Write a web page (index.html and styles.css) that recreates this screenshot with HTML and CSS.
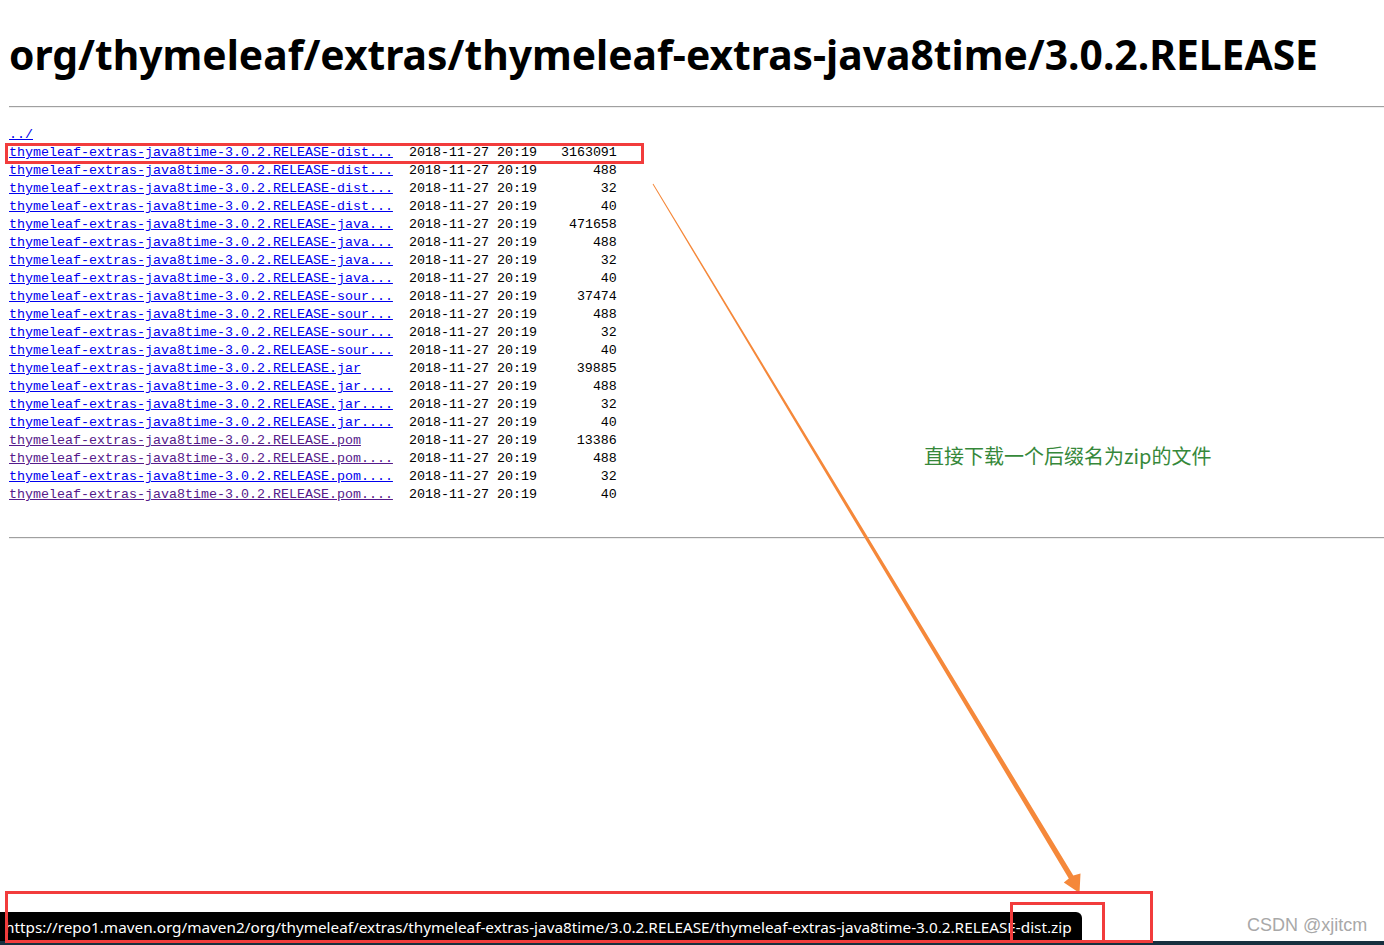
FILE: index.html
```html
<!DOCTYPE html>
<html>
<head>
<meta charset="utf-8">
<title>Index of /maven2/org/thymeleaf/extras/thymeleaf-extras-java8time/3.0.2.RELEASE/</title>
<link rel="stylesheet" href="styles.css">
</head>
<body>
<h1 class="title">org/thymeleaf/extras/thymeleaf-extras-java8time/3.0.2.RELEASE</h1>
<hr class="rule rule-top">
<pre class="listing"><a href="#">../</a>
<a href="#">thymeleaf-extras-java8time-3.0.2.RELEASE-dist...</a>  2018-11-27 20:19   3163091
<a href="#">thymeleaf-extras-java8time-3.0.2.RELEASE-dist...</a>  2018-11-27 20:19       488
<a href="#">thymeleaf-extras-java8time-3.0.2.RELEASE-dist...</a>  2018-11-27 20:19        32
<a href="#">thymeleaf-extras-java8time-3.0.2.RELEASE-dist...</a>  2018-11-27 20:19        40
<a href="#">thymeleaf-extras-java8time-3.0.2.RELEASE-java...</a>  2018-11-27 20:19    471658
<a href="#">thymeleaf-extras-java8time-3.0.2.RELEASE-java...</a>  2018-11-27 20:19       488
<a href="#">thymeleaf-extras-java8time-3.0.2.RELEASE-java...</a>  2018-11-27 20:19        32
<a href="#">thymeleaf-extras-java8time-3.0.2.RELEASE-java...</a>  2018-11-27 20:19        40
<a href="#">thymeleaf-extras-java8time-3.0.2.RELEASE-sour...</a>  2018-11-27 20:19     37474
<a href="#">thymeleaf-extras-java8time-3.0.2.RELEASE-sour...</a>  2018-11-27 20:19       488
<a href="#">thymeleaf-extras-java8time-3.0.2.RELEASE-sour...</a>  2018-11-27 20:19        32
<a href="#">thymeleaf-extras-java8time-3.0.2.RELEASE-sour...</a>  2018-11-27 20:19        40
<a href="#">thymeleaf-extras-java8time-3.0.2.RELEASE.jar</a>      2018-11-27 20:19     39885
<a href="#">thymeleaf-extras-java8time-3.0.2.RELEASE.jar....</a>  2018-11-27 20:19       488
<a href="#">thymeleaf-extras-java8time-3.0.2.RELEASE.jar....</a>  2018-11-27 20:19        32
<a href="#">thymeleaf-extras-java8time-3.0.2.RELEASE.jar....</a>  2018-11-27 20:19        40
<a class="visited" href="#">thymeleaf-extras-java8time-3.0.2.RELEASE.pom</a>      2018-11-27 20:19     13386
<a class="visited" href="#">thymeleaf-extras-java8time-3.0.2.RELEASE.pom....</a>  2018-11-27 20:19       488
<a href="#">thymeleaf-extras-java8time-3.0.2.RELEASE.pom....</a>  2018-11-27 20:19        32
<a class="visited" href="#">thymeleaf-extras-java8time-3.0.2.RELEASE.pom....</a>  2018-11-27 20:19        40
</pre>
<hr class="rule rule-bottom">

<svg class="arrow" width="1384" height="945" viewBox="0 0 1384 945" xmlns="http://www.w3.org/2000/svg">
  <polygon fill="#f5883a" points="653.4,183.7 1073.3,875.6 1080.5,873.5 1079.5,893 1063.8,882.5 1068.8,878.4 652.6,184.3"/>
</svg>

<div class="note">直接下载一个后缀名为zip的文件</div>

<div class="status">https://repo1.maven.org/maven2/org/thymeleaf/extras/thymeleaf-extras-java8time/3.0.2.RELEASE/thymeleaf-extras-java8time-3.0.2.RELEASE-dist.zip</div>
<div class="taskbar"></div>
<div class="watermark">CSDN @xjitcm</div>

<div class="mark mark-row"></div>
<div class="mark mark-status"></div>
<div class="mark mark-ext"></div>
</body>
</html>
```

FILE: styles.css
```css
html, body {
  background: #ffffff;
}
body {
  margin: 8px 0 0 8px;
  overflow: hidden;
  height: 937px;
}
.title {
  margin: 22px 0 0 1px;
  font-family: "Noto Sans", "Open Sans", sans-serif;
  font-weight: 700;
  font-size: 40.8px;
  line-height: 48px;
  color: #000;
  white-space: nowrap;
}
.rule {
  border: 0;
  height: 0;
  border-top: 1px solid #a0a0a0;
  border-bottom: 1px solid #eeeeee;
  margin: 0 0 0 1px;
}
.rule-top {
  margin-top: 28px;
}
.listing {
  margin: 18px 0 0 1px;
  font-family: "Liberation Mono", "DejaVu Sans Mono", monospace;
  font-size: 13.33px;
  line-height: 18px;
  color: #000;
}
.listing a {
  color: #0000ee;
}
.listing a.visited {
  color: #551a8b;
}
.rule-bottom {
  margin-top: 33px;
}
.arrow {
  position: absolute;
  left: 0;
  top: 0;
  pointer-events: none;
}
.note {
  position: absolute;
  left: 924px;
  top: 444px;
  font-family: "Noto Sans CJK SC", "Noto Sans", sans-serif;
  font-size: 20px;
  line-height: 24px;
  color: #36883a;
  white-space: nowrap;
}
.status {
  position: absolute;
  left: 0;
  top: 912px;
  width: 1082px;
  height: 30px;
  box-sizing: border-box;
  padding-left: 5px;
  background: #000;
  color: #fff;
  border-top-right-radius: 6px;
  font-family: "Noto Sans", "Open Sans", sans-serif;
  font-size: 15.3px;
  line-height: 30px;
  white-space: nowrap;
}
.taskbar {
  position: absolute;
  left: 0;
  top: 941px;
  width: 1384px;
  height: 4px;
  background: #17303f;
}
.watermark {
  position: absolute;
  left: 1247px;
  top: 914px;
  font-family: "Liberation Sans", Arial, sans-serif;
  font-size: 18px;
  line-height: 22px;
  color: #a8a8a8;
  white-space: nowrap;
}
.mark {
  position: absolute;
  border: 3px solid #f23c3c;
  box-sizing: border-box;
}
.mark-row {
  left: 5px;
  top: 143px;
  width: 639px;
  height: 21px;
}
.mark-status {
  left: 5px;
  top: 891px;
  width: 1148px;
  height: 52px;
}
.mark-ext {
  left: 1010px;
  top: 902px;
  width: 95px;
  height: 41px;
}
```
